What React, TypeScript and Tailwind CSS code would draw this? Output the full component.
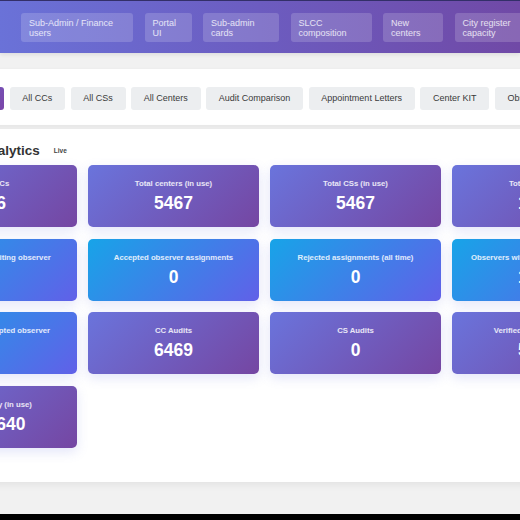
const navLinks = [
  { label: "Sub-Admin / Finance users", w: "w-[112px]" },
  { label: "Portal UI", w: "w-[47px]" },
  { label: "Sub-admin cards", w: "w-[76px]" },
  { label: "SLCC composition", w: "w-[81px]" },
  { label: "New centers", w: "w-[60px]" },
  { label: "City register capacity", w: "w-[80px]" },
]

const tabs = ["All CCs", "All CSs", "All Centers", "Audit Comparison", "Appointment Letters", "Center KIT", "Observers", "Reports"]

type Stat = { label: string; value: string; tone: "purple" | "blue" }

const stats: Stat[] = [
  { label: "Total CCs", value: "546", tone: "purple" },
  { label: "Total centers (in use)", value: "5467", tone: "purple" },
  { label: "Total CSs (in use)", value: "5467", tone: "purple" },
  { label: "Total observers", value: "1250", tone: "purple" },
  { label: "Exam centers awaiting observer", value: "0", tone: "blue" },
  { label: "Accepted observer assignments", value: "0", tone: "blue" },
  { label: "Rejected assignments (all time)", value: "0", tone: "blue" },
  { label: "Observers without any assignments", value: "1024", tone: "blue" },
  { label: "Centers with accepted observer", value: "0", tone: "blue" },
  { label: "CC Audits", value: "6469", tone: "purple" },
  { label: "CS Audits", value: "0", tone: "purple" },
  { label: "Verified centers (in use)", value: "5412", tone: "purple" },
  { label: "Total capacity (in use)", value: "1,45,640", tone: "purple" },
]

function StatCard({ stat }: { stat: Stat }) {
  return (
    <div
      className={`flex h-[62px] flex-col items-center rounded-[5px] pt-[14px] text-white shadow-[0_4px_12px_rgba(102,110,220,0.18)] ${
        stat.tone === "purple"
          ? "bg-[linear-gradient(135deg,#6a74dc_0%,#7546a2_100%)]"
          : "bg-[linear-gradient(135deg,#17a4e8_0%,#6160e8_100%)]"
      }`}
    >
      <div className="whitespace-nowrap text-[7.75px] font-bold leading-[10px] text-white/85">{stat.label}</div>
      <div className="mt-[4px] text-[17.5px] font-bold leading-[20px]">{stat.value}</div>
    </div>
  )
}

export default function App() {
  return (
    <div className="flex h-[520px] w-[520px] flex-col overflow-hidden bg-[#f1f1f1] font-['Liberation_Sans',Arial,sans-serif]">
      <div className="h-[1px] bg-[#34306a]" />
      <header className="flex shrink-0 gap-[11.5px] bg-[linear-gradient(90deg,#6a72d8_0%,#6c5cc0_50%,#7049a6_100%)] px-[21px] pb-[11px] pt-[12px] shadow-[0_2px_4px_rgba(0,0,0,0.08)]">
        {navLinks.map((link) => (
          <div
            key={link.label}
            className={`${link.w} shrink-0 rounded-[3px] bg-white/[0.17] px-[8px] py-[4.5px] text-[9px] leading-[10px] text-white/80`}
          >
            {link.label}
          </div>
        ))}
      </header>

      <div className="ml-[-110px] flex w-[840px] flex-col gap-[4px] pt-[16px]">
        <div className="flex gap-[5.5px] bg-white px-[16px] pb-[15px] pt-[18px] shadow-[0_1px_4px_rgba(0,0,0,0.06)]">
          <div className="flex h-[23px] w-[98px] shrink-0 items-center justify-center rounded-[3px] bg-[linear-gradient(135deg,#6a74dc,#7a45a8)] text-[9px] text-white">
            Dashboard
          </div>
          {tabs.map((tab) => (
            <div
              key={tab}
              className="flex h-[23px] shrink-0 items-center rounded-[3px] bg-[#eceef0] px-[12.75px] text-[9px] text-[#3a3a3a]"
            >
              {tab}
            </div>
          ))}
        </div>

        <div className="bg-white px-[16px] pb-[34px] pt-[14px] shadow-[0_2px_8px_rgba(0,0,0,0.07)]">
          <div className="mb-[6px] flex items-center">
            <h2 className="text-[13.5px] font-bold leading-[16px] text-[#333]">Dashboard Analytics</h2>
            <span className="ml-[14px] text-[6.5px] font-semibold text-[#444]">Live</span>
          </div>
          <div className="grid grid-cols-[repeat(4,171px)] gap-x-[11px] gap-y-[11.5px]">
            {stats.map((stat) => (
              <StatCard key={stat.label} stat={stat} />
            ))}
          </div>
        </div>
      </div>

      <div className="flex-1" />
      <div className="h-[6px] shrink-0 bg-black" />
    </div>
  )
}
